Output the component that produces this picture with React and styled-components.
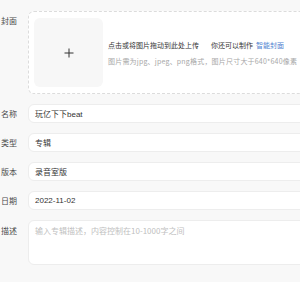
import React from "react";
import styled, { createGlobalStyle } from "styled-components";

const Global = createGlobalStyle`
  html, body { margin: 0; padding: 0; background: #ffffff; overflow: hidden; }
  body { font-family: "Liberation Sans", "Noto Sans CJK SC", sans-serif; }
`;

const Page = styled.div`
  background: #f8f8f8;
  padding: 11px 0 17px 0;
  width: 520px;
  display: flex;
  flex-direction: column;
  gap: 10px;
`;

const Row = styled.div`
  display: flex;
  align-items: flex-start;
  gap: 11px;
`;

const Label = styled.div`
  width: 17px;
  flex-shrink: 0;
  display: flex;
  justify-content: flex-end;
  white-space: nowrap;
  font-family: "Noto Sans CJK SC", sans-serif;
  font-size: 8px;
  line-height: 19px;
  height: 19px;
  color: #4a4a4a;
  margin-top: ${(p) => p.$offset || 0}px;
`;

const CoverBox = styled.div`
  flex: 1;
  border: 1px dashed #dcdcdc;
  border-radius: 6px;
  background: #ffffff;
  padding: 6px 5px;
  display: flex;
  align-items: center;
  gap: 5px;
`;

const Square = styled.div`
  width: 69px;
  height: 69px;
  border-radius: 6px;
  background: #f7f7f7;
  display: flex;
  align-items: center;
  justify-content: center;
  flex-shrink: 0;
`;

const Hint = styled.div`
  display: flex;
  flex-direction: column;
  gap: 6px;
  font-family: "Noto Sans CJK SC", sans-serif;
  font-size: 7px;
  line-height: 10px;
  white-space: nowrap;
`;

const HintMain = styled.div`
  color: #333;
`;

const HintSub = styled.div`
  color: #a8a8a8;
  letter-spacing: 0.2px;
`;

const Gap = styled.span`
  display: inline-block;
  width: 12px;
`;

const Link = styled.span`
  color: #4f7fcf;
  margin-left: 3px;
`;

const Input = styled.input`
  flex: 1;
  box-sizing: border-box;
  height: 19px;
  border: 1px solid #ededed;
  border-radius: 6px;
  background: #ffffff;
  padding: 0 6px;
  font-family: "Liberation Sans", "Noto Sans CJK SC", sans-serif;
  font-size: 8px;
  color: #333;
  outline: none;
`;

const Area = styled.textarea`
  flex: 1;
  box-sizing: border-box;
  height: 45px;
  border: 1px solid #ededed;
  border-radius: 6px;
  background: #ffffff;
  padding: 4px 6px;
  font-family: "Noto Sans CJK SC", sans-serif;
  font-size: 8px;
  line-height: 12px;
  color: #333;
  resize: none;
  outline: none;
  &::placeholder { color: #c0c0c0; }
`;

const Plus = () => (
  <svg width="10" height="10" viewBox="0 0 10 10">
    <path d="M5 0.5V9.5M0.5 5H9.5" stroke="#333" strokeWidth="1" />
  </svg>
);

export default function App() {
  return (
    <>
      <Global />
      <Page>
        <Row>
          <Label>封面</Label>
          <CoverBox>
            <Square>
              <Plus />
            </Square>
            <Hint>
              <HintMain>
                点击或将图片拖动到此处上传<Gap />你还可以制作<Link>智能封面</Link>
              </HintMain>
              <HintSub>图片需为jpg、jpeg、png格式，图片尺寸大于640*640像素</HintSub>
            </Hint>
          </CoverBox>
        </Row>
        <Row>
          <Label>名称</Label>
          <Input readOnly value="玩亿下下beat" />
        </Row>
        <Row>
          <Label>类型</Label>
          <Input readOnly value="专辑" />
        </Row>
        <Row>
          <Label>版本</Label>
          <Input readOnly value="录音室版" />
        </Row>
        <Row>
          <Label>日期</Label>
          <Input readOnly value="2022-11-02" />
        </Row>
        <Row>
          <Label $offset={1}>描述</Label>
          <Area readOnly placeholder="输入专辑描述，内容控制在10-1000字之间" />
        </Row>
      </Page>
    </>
  );
}
